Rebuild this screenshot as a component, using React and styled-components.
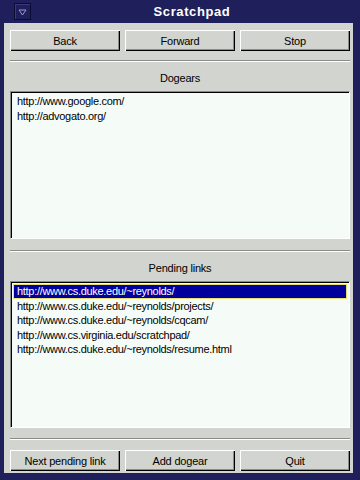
import React from "react"
import styled, { createGlobalStyle } from "styled-components"

const Global = createGlobalStyle`
    html, body {
        margin: 0;
        padding: 0;
        background: #1f1f5c;
    }
`

const Frame = styled.div`
    width: 360px;
    height: 480px;
    box-sizing: border-box;
    background: #1f1f5c;
    display: flex;
    flex-direction: column;
    padding: 0 7px 7px 4px;
    font-family: "Liberation Sans", Arial, sans-serif;
`

const TitleBar = styled.div`
    height: 23px;
    display: flex;
    align-items: center;
    flex-shrink: 0;
`

const MenuBox = styled.div`
    width: 15px;
    height: 15px;
    margin-left: 10px;
    border: 1px solid #0c0c30;
    box-shadow: inset 1px 1px 0 #3a3a7a;
    display: flex;
    align-items: center;
    justify-content: center;
`

const Title = styled.div`
    flex: 1;
    text-align: center;
    color: #ffffff;
    font-weight: bold;
    font-size: 13px;
    letter-spacing: 0.6px;
`

const Panel = styled.div`
    flex: 1;
    background: #d1d4cf;
    display: flex;
    flex-direction: column;
    padding: 7px 3px 2px 6px;
`

const ButtonRow = styled.div`
    display: grid;
    grid-template-columns: repeat(3, 1fr);
    gap: 5px;
    height: 21px;
    flex-shrink: 0;
    margin-top: ${p => p.$top || 0}px;
`

const Button = styled.button`
    margin: 0;
    padding: 0;
    background: #d1d4cf;
    border: none;
    box-shadow: inset 1px 1px 0 #ffffff, inset -1px -1px 0 #000000, inset -2px -2px 0 #8a8c88;
    font-family: "Liberation Sans", Arial, sans-serif;
    font-size: 11px;
    letter-spacing: -0.2px;
    color: #000;
`

const Separator = styled.div`
    height: 0;
    border-top: 1px solid #8a8c88;
    border-bottom: 1px solid #ffffff;
    margin-top: ${p => p.$top}px;
    flex-shrink: 0;
`

const Label = styled.div`
    height: 29px;
    line-height: 32px;
    text-align: center;
    font-size: 11px;
    letter-spacing: -0.2px;
    color: #000;
    flex-shrink: 0;
`

const ListBox = styled.div`
    height: ${p => p.$h}px;
    box-sizing: border-box;
    background: #f5fcf8;
    border-top: 1px solid #8a8c88;
    border-left: 1px solid #8a8c88;
    border-right: 1px solid #ffffff;
    border-bottom: 1px solid #ffffff;
    box-shadow: inset 1px 1px 0 #000000;
    padding: 2px 2px 2px 2px;
    flex-shrink: 0;
`

const Item = styled.div`
    height: ${p => p.$lh}px;
    line-height: ${p => p.$lh}px;
    font-size: 11px;
    letter-spacing: -0.3px;
    padding-left: 4px;
    color: ${p => (p.$sel ? "#ffffff" : "#000000")};
    background: ${p => (p.$sel ? "#00009c" : "transparent")};
    outline: ${p => (p.$sel ? "1px solid #e8e070" : "none")};
    outline-offset: -1px;
    white-space: nowrap;
`

const dogears = ["http://www.google.com/", "http://advogato.org/"]

const pending = [
    "http://www.cs.duke.edu/~reynolds/",
    "http://www.cs.duke.edu/~reynolds/projects/",
    "http://www.cs.duke.edu/~reynolds/cqcam/",
    "http://www.cs.virginia.edu/scratchpad/",
    "http://www.cs.duke.edu/~reynolds/resume.html",
]

const App = () => {
    return (
        <Frame>
            <Global />
            <TitleBar>
                <MenuBox>
                    <svg width="9" height="8" viewBox="0 0 9 8">
                        <path d="M1 2 H8 L4.5 7 Z" fill="none" stroke="#9a9ad0" strokeWidth="1" />
                    </svg>
                </MenuBox>
                <Title>Scratchpad</Title>
            </TitleBar>
            <Panel>
                <ButtonRow>
                    <Button>Back</Button>
                    <Button>Forward</Button>
                    <Button>Stop</Button>
                </ButtonRow>
                <Separator $top={9} />
                <Label>Dogears</Label>
                <ListBox $h={148}>
                    {dogears.map(u => (
                        <Item key={u} $lh={15}>{u}</Item>
                    ))}
                </ListBox>
                <Separator $top={11} />
                <Label>Pending links</Label>
                <ListBox $h={147}>
                    {pending.map((u, i) => (
                        <Item key={u} $lh={14.5} $sel={i === 0}>{u}</Item>
                    ))}
                </ListBox>
                <Separator $top={10} />
                <ButtonRow $top={10}>
                    <Button>Next pending link</Button>
                    <Button>Add dogear</Button>
                    <Button>Quit</Button>
                </ButtonRow>
            </Panel>
        </Frame>
    )
}

export default App
